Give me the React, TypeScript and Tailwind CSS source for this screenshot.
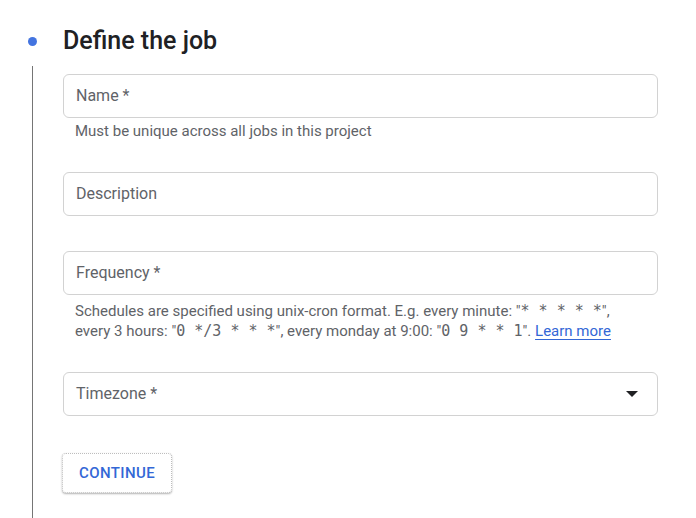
import React from "react";

const Field = ({ label, select }: { label: string; select?: boolean }) => {
    return (
        <div className="flex items-center justify-between h-[44px] w-[595px] border border-[#d2d2d2] rounded-[6px] pl-[12px] pr-[19px]">
            <span className="text-[16px] text-[#5f6368]">{label}</span>
            {select && (
                <svg width="12" height="6" viewBox="0 0 12 6">
                    <path d="M0 0h12L6 6z" fill="#202124" />
                </svg>
            )}
        </div>
    );
};

const Mono = ({ children }: { children: React.ReactNode }) => (
    <span className="font-['DejaVu_Sans_Mono',monospace] text-[15px]">{children}</span>
);

export default function App() {
    return (
        <div className="min-h-[518px] bg-white font-['Roboto',sans-serif] pt-[27px]">
            {/* Step header */}
            <div className="flex items-center h-[28px]">
                <div className="w-[63px] pl-[28px]">
                    <div className="w-[9px] h-[9px] rounded-full bg-[#4374e0]" />
                </div>
                <h2 className="text-[25px] font-medium text-[#202124]">Define the job</h2>
            </div>

            {/* Step body */}
            <div className="ml-[32px] mt-[11px] border-l border-[#757575] pl-[30px] pt-[8px] pb-[30px] min-h-[452px]">
                <Field label="Name *" />
                <p className="mt-[3px] ml-[12px] text-[15px] leading-5 text-[#5f6368]">
                    Must be unique across all jobs in this project
                </p>

                <div className="mt-[31px]">
                    <Field label="Description" />
                </div>

                <div className="mt-[35px]">
                    <Field label="Frequency *" />
                </div>
                <p className="mt-[6px] ml-[12px] text-[15px] leading-5 text-[#5f6368]">
                    Schedules are specified using unix-cron format. E.g. every minute: "<Mono>* * * * *</Mono>",
                    <br />
                    every 3 hours: "<Mono>0 */3 * * *</Mono>", every monday at 9:00: "<Mono>0 9 * * 1</Mono>".{" "}
                    <a href="#" className="text-[#3367d6] underline underline-offset-[3px]">Learn more</a>
                </p>

                <div className="mt-[31px]">
                    <Field label="Timezone *" select />
                </div>

                <button
                    type="button"
                    className="mt-[37px] -ml-[1px] h-[40px] w-[110px] rounded-[4px] border border-dotted border-[#bdbdbd] bg-white shadow-[0_1px_2px_rgba(0,0,0,0.3)] text-[15px] font-medium text-[#3367d6] tracking-[0.4px]"
                >
                    CONTINUE
                </button>
            </div>
        </div>
    );
}
